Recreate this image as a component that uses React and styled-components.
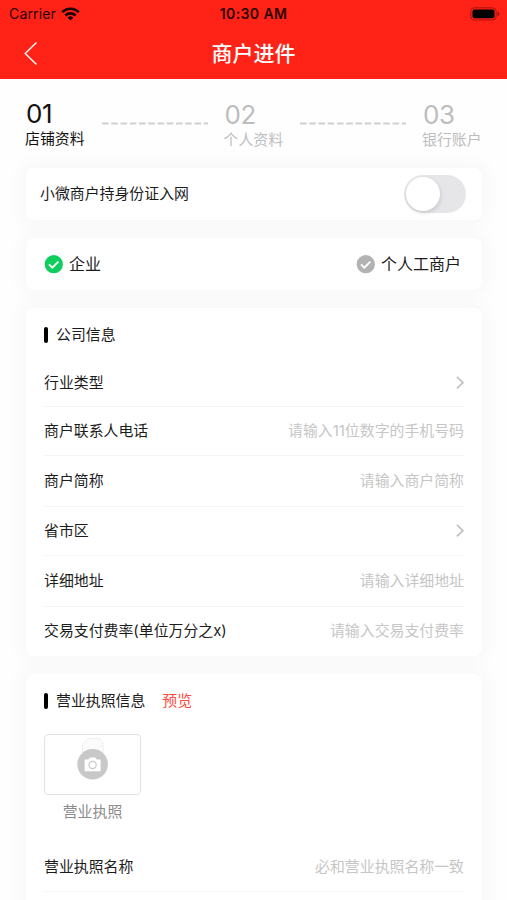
import React from "react";
import styled, { createGlobalStyle } from "styled-components";

const GlobalStyle = createGlobalStyle`
  * {
    box-sizing: border-box;
  }
  body {
    margin: 0;
    background-color: #fefefe;
    color: #1c1c1c;
    font-family: Inter, "Noto Sans CJK SC", sans-serif;
    font-size: 14.9px;
    line-height: 20px;
  }
`;

const Screen = styled.div`
  width: 507px;
  height: 900px;
  overflow: hidden;
`;

const Header = styled.header`
  height: 79px;
  background-color: #ff2217;
`;

const StatusBar = styled.div`
  display: grid;
  grid-template-columns: 1fr auto 1fr;
  align-items: center;
  height: 28px;
  padding: 0 7px 0 7px;
  color: #2b0503;
  font-size: 14px;
`;

const Carrier = styled.div`
  display: flex;
  align-items: center;
  gap: 5px;
  padding-left: 2px;
  letter-spacing: 0.15px;
`;

const Clock = styled.div`
  font-weight: 600;
  letter-spacing: 0.4px;
`;

const Battery = styled.svg`
  justify-self: end;
`;

const NavBar = styled.div`
  display: grid;
  grid-template-columns: 1fr auto 1fr;
  align-items: center;
  height: 51px;
  padding: 0 23px;
`;

const PageTitle = styled.h1`
  margin: 0;
  color: #fff;
  font-size: 21px;
  font-weight: 500;
  line-height: 30px;
`;

const Steps = styled.div`
  display: flex;
  justify-content: space-between;
  height: 89px;
  padding: 21px 25px 0 25px;
`;

const Step = styled.div`
  width: 60px;
  padding-top: ${(props) => (props.$active ? 0 : 1)}px;
  color: ${(props) => (props.$active ? "#111" : "#bdbdbd")};
  white-space: nowrap;
`;

const StepNumber = styled.div`
  height: 28px;
  padding-left: 1px;
  font-size: 26px;
  line-height: 28px;
  letter-spacing: -0.4px;
`;

const StepName = styled.div`
  line-height: 22px;
`;

const Dashes = styled.svg`
  margin: 22px -1px 0 0;
`;

const Cards = styled.main`
  display: flex;
  flex-direction: column;
  gap: 18px;
  padding: 0 25px 0 26px;
`;

const Card = styled.section`
  padding: ${(props) => props.$padding || "0 18px"};
  border-radius: 8px;
  background-color: #fff;
  box-shadow: 0 0 18px 6px rgba(0, 0, 0, 0.028);
`;

const BarCard = styled(Card)`
  display: flex;
  align-items: center;
  justify-content: space-between;
  height: 52px;
`;

const Switch = styled.div`
  width: 62px;
  height: 38px;
  margin-bottom: 1px;
  padding: 2px;
  border-radius: 19px;
  background-color: #e6e6e9;
`;

const Knob = styled.div`
  width: 34px;
  height: 34px;
  border-radius: 50%;
  background-color: #fff;
  box-shadow: 1px 2px 4px rgba(0, 0, 0, 0.12);
`;

const Option = styled.div`
  display: flex;
  align-items: center;
  gap: 6px;
  font-size: 16px;
`;

const CardTitle = styled.div`
  display: flex;
  align-items: center;
  height: 54px;
`;

const Mark = styled.span`
  width: 4px;
  height: 16px;
  margin-right: 8px;
  border-radius: 2px;
  background-color: #000;
`;

const Preview = styled.span`
  margin-left: 17px;
  color: #ff4a40;
`;

const Row = styled.div`
  display: flex;
  align-items: center;
  justify-content: space-between;
  height: ${(props) => props.$height || 50}px;
  padding-bottom: ${(props) => (props.$first ? 2 : 0)}px;
  border-bottom: 1px solid ${(props) => (props.$last ? "transparent" : "#f5f5f5")};
`;

const Placeholder = styled.span`
  color: #c6c6c6;
`;

const Upload = styled.div`
  display: flex;
  flex-direction: column;
  align-items: center;
  width: 97px;
  height: 108px;
  margin-top: 6px;
  color: #8c8c8c;
`;

const UploadBox = styled.div`
  display: flex;
  justify-content: center;
  width: 97px;
  height: 61px;
  margin-bottom: 7px;
  border: 1px solid #e2e2e2;
  border-radius: 4px;
`;

const WifiIcon = () => (
  <svg width="19" height="14" viewBox="0 0 19 14" fill="none" stroke="#1c0302" strokeWidth="2.6">
    <path d="M1.2 5.2a11.8 11.8 0 0 1 16.6 0" />
    <path d="M4.4 8.5a7.3 7.3 0 0 1 10.2 0" />
    <path d="M9.5 13.6 6.6 10.7a4.1 4.1 0 0 1 5.8 0z" fill="#1c0302" stroke="none" />
  </svg>
);

const BatteryIcon = () => (
  <Battery width="30" height="14" viewBox="0 0 30 14">
    <rect x="0.8" y="0.8" width="25.4" height="12.2" rx="3.6" fill="none" stroke="#a5150e" />
    <rect x="2.5" y="2.5" width="22" height="8.8" rx="2" fill="#000" />
    <path d="M27.6 4.8v4.4c1-.4 1.7-1.2 1.7-2.2s-.7-1.8-1.7-2.2z" fill="#8c120c" />
  </Battery>
);

const BackIcon = () => (
  <svg width="15" height="24" viewBox="0 0 15 24" fill="none" stroke="#fff" strokeWidth="1.4">
    <path d="M13.5 0.5 2.2 11.5l11.3 11" />
  </svg>
);

const CheckIcon = ({ color }) => (
  <svg width="19" height="19" viewBox="0 0 19 19" fill="none">
    <circle cx="9.8" cy="9.2" r="9.1" fill={color} />
    <path d="m5 9.4 3.3 3.2 6.1-6" stroke="#fff" strokeWidth="1.9" />
  </svg>
);

const ArrowIcon = () => (
  <svg width="9" height="14" viewBox="0 0 9 14" fill="none" stroke="#c0c0c0" strokeWidth="1.6">
    <path d="m1.9 0.8 6 5.8-6 5.8" />
  </svg>
);

const StepLine = () => (
  <Dashes width="108" height="3" viewBox="0 0 108 3">
    <path d="M1 1.5h106" stroke="#d0d0d0" strokeWidth="1.8" strokeDasharray="6.6 2.65" />
  </Dashes>
);

const CameraIcon = () => (
  <svg width="40" height="50" viewBox="0 0 40 50">
    <path
      d="M9.5 18V9.5l5.5-6h9c3.5 0 6 3 6 6v9"
      fill="#fbfbfb"
      stroke="#e2e2e2"
      strokeWidth="0.8"
      strokeDasharray="2 1"
    />
    <circle cx="19.6" cy="29.3" r="15.3" fill="#c8c8c8" />
    <path d="M11.6 24.6h3.8l1.6-2h5.2l1.6 2h3.8v11.6h-16z" fill="#fff" />
    <circle cx="19.6" cy="30" r="3.6" fill="#fff" stroke="#c8c8c8" strokeWidth="1.2" />
  </svg>
);

const fields = [
  { label: "行业类型", height: 45 },
  { label: "商户联系人电话", hint: "请输入11位数字的手机号码", height: 49 },
  { label: "商户简称", hint: "请输入商户简称", height: 51 },
  { label: "省市区", height: 49 },
  { label: "详细地址", hint: "请输入详细地址", height: 51 },
  { label: "交易支付费率(单位万分之x)", hint: "请输入交易支付费率", height: 49 },
];

const App = () => (
  <Screen>
    <GlobalStyle />
    <Header>
      <StatusBar>
        <Carrier>
          Carrier <WifiIcon />
        </Carrier>
        <Clock>10:30 AM</Clock>
        <BatteryIcon />
      </StatusBar>
      <NavBar>
        <BackIcon />
        <PageTitle>商户进件</PageTitle>
      </NavBar>
    </Header>
    <Steps>
      <Step $active>
        <StepNumber>01</StepNumber>
        <StepName>店铺资料</StepName>
      </Step>
      <StepLine />
      <Step>
        <StepNumber>02</StepNumber>
        <StepName>个人资料</StepName>
      </Step>
      <StepLine />
      <Step>
        <StepNumber>03</StepNumber>
        <StepName>银行账户</StepName>
      </Step>
    </Steps>
    <Cards>
      <BarCard $padding="0 16px 0 14px">
        小微商户持身份证入网
        <Switch>
          <Knob />
        </Switch>
      </BarCard>
      <BarCard $padding="0 21px 0 18px">
        <Option>
          <CheckIcon color="#0fce5e" />
          企业
        </Option>
        <Option>
          <CheckIcon color="#b2b2b2" />
          个人工商户
        </Option>
      </BarCard>
      <Card>
        <CardTitle>
          <Mark />
          公司信息
        </CardTitle>
        {fields.map(({ label, hint, height }, i) => (
          <Row key={label} $height={height} $first={i === 0} $last={i === fields.length - 1}>
            {label}
            {hint ? <Placeholder>{hint}</Placeholder> : <ArrowIcon />}
          </Row>
        ))}
      </Card>
      <Card>
        <CardTitle>
          <Mark />
          营业执照信息
          <Preview>预览</Preview>
        </CardTitle>
        <Upload>
          <UploadBox>
            <CameraIcon />
          </UploadBox>
          营业执照
        </Upload>
        <Row>
          营业执照名称
          <Placeholder>必和营业执照名称一致</Placeholder>
        </Row>
        <Row />
      </Card>
    </Cards>
  </Screen>
);

export default App;
